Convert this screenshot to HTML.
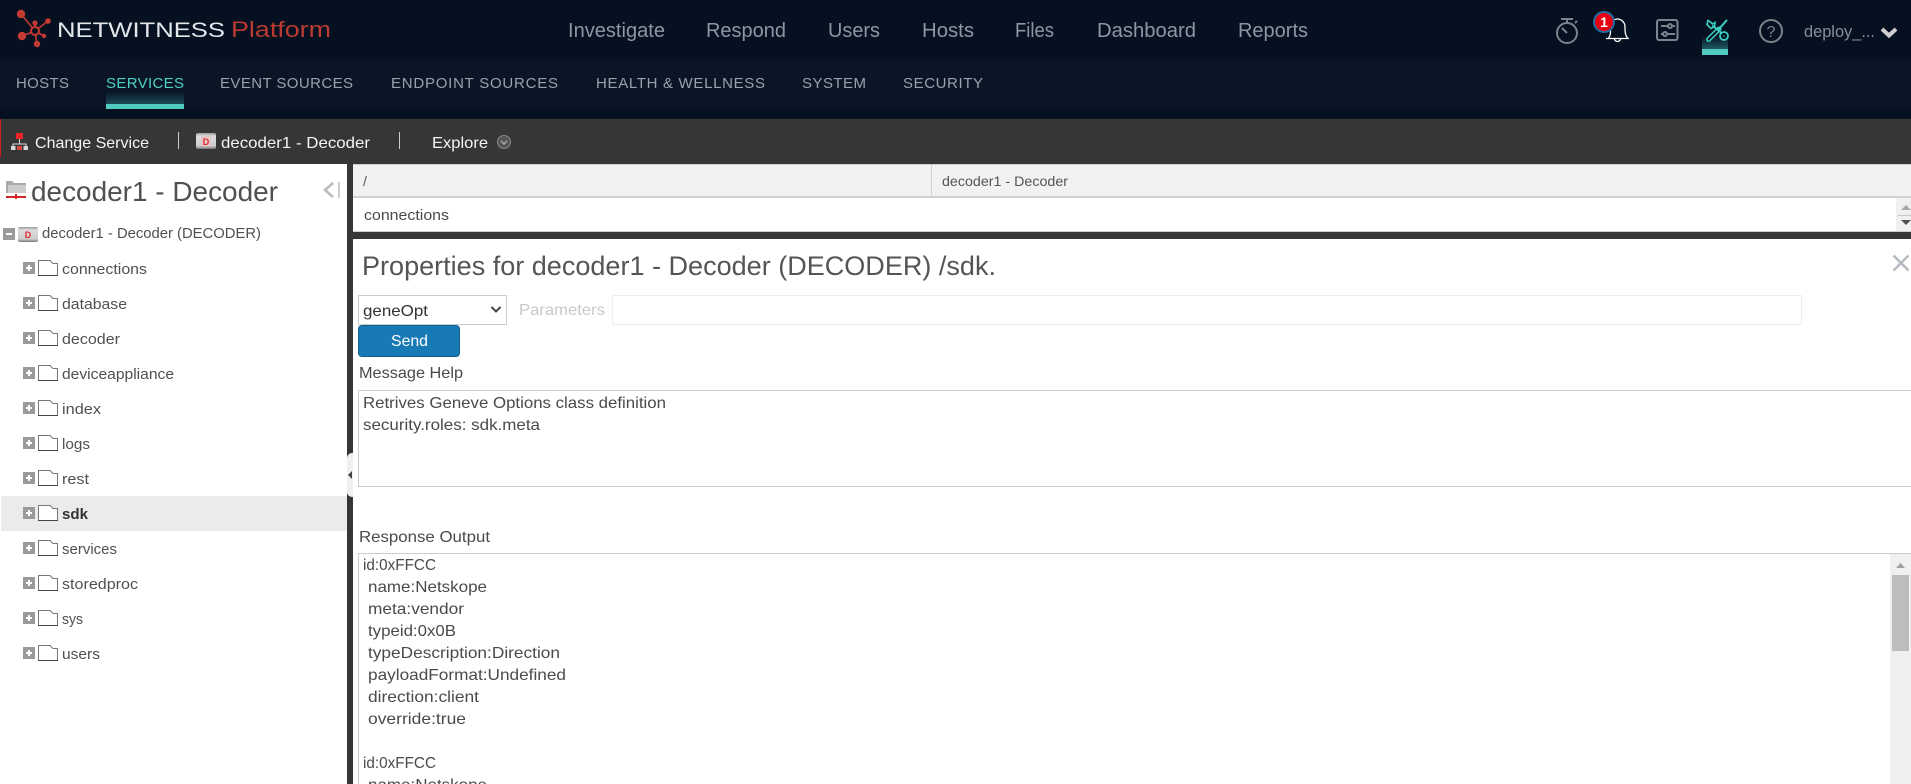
<!DOCTYPE html>
<html lang="en">
<head>
<meta charset="utf-8">
<title>NetWitness Platform - Explore</title>
<style>
html,body{margin:0;padding:0;width:1911px;height:784px;overflow:hidden;background:#fff;font-family:"Liberation Sans",sans-serif}
.b{position:absolute;box-sizing:border-box}
svg{position:absolute;left:0;top:0}
text{font-family:"Liberation Sans",sans-serif;white-space:pre}
.top{font-size:20px;fill:#8d96a3}
.sub{font-size:15px;fill:#98a2ad}
.bar{font-size:16px;fill:#f4f4f4}
.tree{font-size:15px;fill:#505050}
.body{font-size:16px;fill:#4a4a4a}
</style>
</head>
<body>
<div class="b" style="left:0;top:0;width:1911px;height:59px;background:#051020"></div>
<div class="b" style="left:0;top:59px;width:1911px;height:50px;background:#0a1626"></div>
<div class="b" style="left:0;top:109px;width:1911px;height:10px;background:#051020"></div>
<div class="b" style="left:106px;top:92px;width:78px;height:12px;background:linear-gradient(#0a1626,#1c4a55)"></div>
<div class="b" style="left:106px;top:104px;width:78px;height:5px;background:#50c9c0"></div>
<div class="b" style="left:1702px;top:36px;width:26px;height:13px;background:linear-gradient(#051020,#1e5a63)"></div>
<div class="b" style="left:1702px;top:49px;width:26px;height:6px;background:#50c9c0"></div>
<div class="b" style="left:0;top:119px;width:1911px;height:45px;background:#363636"></div>
<div class="b" style="left:0;top:119px;width:1px;height:38px;background:#d01c1c"></div>
<div class="b" style="left:1px;top:496px;width:346px;height:35px;background:#ebebeb"></div>
<div class="b" style="left:347px;top:164px;width:6px;height:620px;background:#363636"></div>
<div class="b" style="left:347px;top:453px;width:6px;height:44px;background:#f0f0f0;border-radius:5px 0 0 5px"></div>
<div class="b" style="left:353px;top:164px;width:1558px;height:34px;background:#f2f2f2;border-top:1px solid #d0d0d0;border-bottom:2px solid #d0d0d0"></div>
<div class="b" style="left:931px;top:165px;width:1px;height:32px;background:#d0d0d0"></div>
<div class="b" style="left:353px;top:231px;width:1558px;height:8px;background:#363636;border-top:1px solid #cfcfcf"></div>
<div class="b" style="left:1896px;top:198px;width:15px;height:33px;background:#f0f0f0"></div>
<div class="b" style="left:1898px;top:215px;width:13px;height:1px;background:#c8c8c8"></div>
<div class="b" style="left:358px;top:295px;width:149px;height:30px;background:#fff;border:1px solid #ccc"></div>
<div class="b" style="left:612px;top:295px;width:1190px;height:30px;background:#fff;border:1px solid #eee"></div>
<div class="b" style="left:358px;top:325px;width:102px;height:32px;background:#177ab5;border:1px solid #11608f;border-radius:4px"></div>
<div class="b" style="left:358px;top:390px;width:1553px;height:97px;border:1px solid #ccc;border-right:0"></div>
<div class="b" style="left:358px;top:553px;width:1553px;height:231px;border-top:1px solid #ccc;border-left:1px solid #ccc"></div>
<div class="b" style="left:1890px;top:554px;width:21px;height:230px;background:#f0f0f0"></div>
<div class="b" style="left:1892px;top:575px;width:17px;height:76px;background:#bdbdbd"></div>

<svg width="1911" height="784" viewBox="0 0 1911 784" xmlns="http://www.w3.org/2000/svg">
<defs>
<symbol id="plus" viewBox="0 0 12 12" width="12" height="12"><rect width="12" height="12" fill="#9a9a9a"/><path d="M3 6h6M6 3v6" stroke="#fff" stroke-width="2"/></symbol>
<symbol id="folder" viewBox="0 0 20 17" width="20" height="17"><path d="M.5 16.5V1.5H12L15 4.5H19.5V16.5Z" fill="#fff" stroke="#777"/><path d="M0 16.5H20" stroke="#444" stroke-width="1"/></symbol>
<linearGradient id="dg" x1="0" y1="0" x2="0" y2="1"><stop offset="0" stop-color="#999"/><stop offset=".2" stop-color="#ddd"/><stop offset=".8" stop-color="#ccc"/><stop offset="1" stop-color="#777"/></linearGradient>
</defs>

<!-- logo -->
<g stroke="#c53a32" stroke-width="1.6" fill="none"><path d="M21 14L35 31M48 21L35 31M35 23V31M22 36L35 31M37 44L35 31M44 36L35 31"/></g>
<g fill="#c53a32"><circle cx="21" cy="14" r="4.2"/><circle cx="48" cy="21" r="2.8"/><circle cx="35" cy="23" r="2.6"/><circle cx="22" cy="36" r="4.2"/><circle cx="37" cy="44" r="3.2"/><circle cx="44" cy="36" r="2.2"/></g>
<circle cx="35" cy="31" r="4" fill="#051020" stroke="#c53a32" stroke-width="2"/>
<text x="57" y="37" font-size="21" fill="#e4e7ea" textLength="168" lengthAdjust="spacingAndGlyphs">NETWITNESS</text>
<text x="231" y="37" font-size="22" fill="#bb3a32" textLength="100" lengthAdjust="spacingAndGlyphs">Platform</text>

<!-- top nav -->
<text class="top" x="568" y="37" textLength="97" lengthAdjust="spacingAndGlyphs">Investigate</text>
<text class="top" x="706" y="37" textLength="80" lengthAdjust="spacingAndGlyphs">Respond</text>
<text class="top" x="828" y="37" textLength="52" lengthAdjust="spacingAndGlyphs">Users</text>
<text class="top" x="922" y="37" textLength="52" lengthAdjust="spacingAndGlyphs">Hosts</text>
<text class="top" x="1015" y="37" textLength="39" lengthAdjust="spacingAndGlyphs">Files</text>
<text class="top" x="1097" y="37" textLength="99" lengthAdjust="spacingAndGlyphs">Dashboard</text>
<text class="top" x="1238" y="37" textLength="70" lengthAdjust="spacingAndGlyphs">Reports</text>

<!-- top icons -->
<g fill="none" stroke="#7d838a" stroke-width="2">
<circle cx="1567" cy="33" r="10"/><path d="M1561 19H1573M1567 19V23M1575 23l2-2M1567 33l-5-5"/>
<rect x="1657" y="20" width="20.5" height="20" rx="2"/><path d="M1661 26H1675M1661 34H1675"/>
<circle cx="1670" cy="26" r="2" fill="#051020"/><circle cx="1665" cy="34" r="2" fill="#051020"/>
<circle cx="1771" cy="31" r="11"/>
</g>
<text x="1771" y="37" font-size="16" fill="#7d838a" text-anchor="middle">?</text>
<g fill="none" stroke="#fff" stroke-width="1.3"><path d="M1606 38.500H1629M1608.500 38C1611 35 1610.500 31 1610.500 27C1610.500 22 1614 19 1617.500 19C1621 19 1625 22 1625 27C1625 31 1625 35 1627.500 38"/><path d="M1614.500 39a3 2.500 0 0 0 6 0"/></g>
<circle cx="1604" cy="22" r="10" fill="#e60012" stroke="#1f6fa5" stroke-width="2"/>
<text x="1604" y="27" font-size="14" font-weight="bold" fill="#fff" text-anchor="middle">1</text>
<g fill="none" stroke-linecap="round">
<path d="M1708.500 39.500L1719 29" stroke="#3dd0c4" stroke-width="5"/>
<path d="M1708.500 39.500L1719 29" stroke="#051020" stroke-width="2"/>
<path d="M1719 29L1726.500 20.500" stroke="#3dd0c4" stroke-width="2"/>
<path d="M1713 26L1721.500 33" stroke="#3dd0c4" stroke-width="2"/>
<path d="M1708 20.500L1707 24.500L1711 28.500L1714.500 26.500L1715 22.500L1712.500 24L1710.500 22Z" stroke="#3dd0c4" stroke-width="1.600"/>
<circle cx="1724" cy="36" r="4" stroke="#3dd0c4" stroke-width="1.800"/>
<circle cx="1724" cy="36" r=".8" fill="#3dd0c4"/>
</g>
<text x="1804" y="37" font-size="17" fill="#8a8f96" textLength="71" lengthAdjust="spacingAndGlyphs">deploy_...</text>
<path d="M1882 29L1889 35.500L1896 29" fill="none" stroke="#cfcfcf" stroke-width="4"/>

<!-- sub nav -->
<text class="sub" x="16" y="88" textLength="53" lengthAdjust="spacing">HOSTS</text>
<text class="sub" x="106" y="88" textLength="78" lengthAdjust="spacing" style="fill:#4fd0c4">SERVICES</text>
<text class="sub" x="220" y="88" textLength="133" lengthAdjust="spacing">EVENT SOURCES</text>
<text class="sub" x="391" y="88" textLength="167" lengthAdjust="spacing">ENDPOINT SOURCES</text>
<text class="sub" x="596" y="88" textLength="169" lengthAdjust="spacing">HEALTH &amp; WELLNESS</text>
<text class="sub" x="802" y="88" textLength="64" lengthAdjust="spacing">SYSTEM</text>
<text class="sub" x="903" y="88" textLength="80" lengthAdjust="spacing">SECURITY</text>

<!-- grey bar -->
<rect x="16" y="133" width="7" height="6" fill="#e8242a"/><path d="M19.500 139V144M13 146V144H26V146" stroke="#ddd" fill="none"/><g fill="#d8d8d8"><rect x="11" y="146" width="4.500" height="4"/><rect x="17" y="146" width="5" height="4" fill="#d44"/><rect x="23.500" y="146" width="4.500" height="4"/></g>
<text class="bar" x="35" y="148" textLength="114" lengthAdjust="spacingAndGlyphs">Change Service</text>
<rect x="178" y="132" width="1" height="17" fill="#ccc"/>
<rect x="196" y="133" width="20" height="16" rx="2" fill="url(#dg)"/><rect x="201" y="136" width="10" height="10" fill="#e3c6c6"/><text x="206" y="145" font-size="9" font-weight="bold" fill="#e0282e" text-anchor="middle">D</text>
<text class="bar" x="221" y="148" textLength="149" lengthAdjust="spacingAndGlyphs">decoder1 - Decoder</text>
<rect x="399" y="132" width="1" height="17" fill="#ccc"/>
<text class="bar" x="432" y="148" textLength="56" lengthAdjust="spacingAndGlyphs">Explore</text>
<circle cx="504" cy="142" r="6.500" fill="#555" stroke="#888"/><path d="M501 141l3 3 3-3" fill="none" stroke="#aaa" stroke-width="1.500"/>

<!-- left panel -->
<path d="M6 181h6l2 2h12v10H6z" fill="#aaa"/><path d="M8 185h18v8H8z" fill="#ccc"/><path d="M6 197H26M16 194v5" stroke="#d2232a" stroke-width="2"/>
<text x="31" y="201" font-size="28" fill="#505050" textLength="247" lengthAdjust="spacingAndGlyphs">decoder1 - Decoder</text>
<path d="M333 183L325 190L333 197" fill="none" stroke="#bbb" stroke-width="2.500"/><rect x="338" y="182" width="2" height="16" fill="#ccc"/>

<rect x="3" y="228" width="12" height="12" fill="#9a9a9a"/><path d="M6 234h6" stroke="#fff" stroke-width="2"/>
<rect x="18" y="227" width="20" height="15" rx="2" fill="url(#dg)"/><text x="28" y="238" font-size="9" font-weight="bold" fill="#e0282e" text-anchor="middle">D</text>
<text class="tree" x="42" y="238" textLength="219" lengthAdjust="spacingAndGlyphs">decoder1 - Decoder (DECODER)</text>

<use href="#plus" x="23" y="262"/><use href="#folder" x="38" y="259"/><text class="tree" x="62" y="274" textLength="85" lengthAdjust="spacingAndGlyphs">connections</text>
<use href="#plus" x="23" y="297"/><use href="#folder" x="38" y="294"/><text class="tree" x="62" y="309" textLength="65" lengthAdjust="spacingAndGlyphs">database</text>
<use href="#plus" x="23" y="332"/><use href="#folder" x="38" y="329"/><text class="tree" x="62" y="344" textLength="58" lengthAdjust="spacingAndGlyphs">decoder</text>
<use href="#plus" x="23" y="367"/><use href="#folder" x="38" y="364"/><text class="tree" x="62" y="379" textLength="112" lengthAdjust="spacingAndGlyphs">deviceappliance</text>
<use href="#plus" x="23" y="402"/><use href="#folder" x="38" y="399"/><text class="tree" x="62" y="414" textLength="39" lengthAdjust="spacingAndGlyphs">index</text>
<use href="#plus" x="23" y="437"/><use href="#folder" x="38" y="434"/><text class="tree" x="62" y="449" textLength="28" lengthAdjust="spacingAndGlyphs">logs</text>
<use href="#plus" x="23" y="472"/><use href="#folder" x="38" y="469"/><text class="tree" x="62" y="484" textLength="27" lengthAdjust="spacingAndGlyphs">rest</text>
<use href="#plus" x="23" y="507"/><use href="#folder" x="38" y="504"/><text class="tree" x="62" y="519" font-weight="bold" textLength="26" lengthAdjust="spacingAndGlyphs" style="fill:#333">sdk</text>
<use href="#plus" x="23" y="542"/><use href="#folder" x="38" y="539"/><text class="tree" x="62" y="554" textLength="55" lengthAdjust="spacingAndGlyphs">services</text>
<use href="#plus" x="23" y="577"/><use href="#folder" x="38" y="574"/><text class="tree" x="62" y="589" textLength="76" lengthAdjust="spacingAndGlyphs">storedproc</text>
<use href="#plus" x="23" y="612"/><use href="#folder" x="38" y="609"/><text class="tree" x="62" y="624" textLength="21" lengthAdjust="spacingAndGlyphs">sys</text>
<use href="#plus" x="23" y="647"/><use href="#folder" x="38" y="644"/><text class="tree" x="62" y="659" textLength="38" lengthAdjust="spacingAndGlyphs">users</text>
<path d="M352 471l-4 4 4 4z" fill="#444"/>

<!-- breadcrumb / list -->
<text x="363" y="186" font-size="14" fill="#555">/</text>
<text x="942" y="186" font-size="14" fill="#555" textLength="126" lengthAdjust="spacingAndGlyphs">decoder1 - Decoder</text>
<text x="364" y="220" font-size="15" fill="#4a4a4a" textLength="85" lengthAdjust="spacingAndGlyphs">connections</text>
<path d="M1906 205l-5 5h10z" fill="#a8a8a8"/><path d="M1901 220h10l-5 5z" fill="#505050"/>

<!-- properties -->
<text x="362" y="275" font-size="27" fill="#555" textLength="634" lengthAdjust="spacingAndGlyphs">Properties for decoder1 - Decoder (DECODER) /sdk.</text>
<path d="M1893.500 255.500L1908.500 270.500M1908.500 255.500L1893.500 270.500" stroke="#b4bac0" stroke-width="2.500"/>
<text class="body" x="363" y="316" textLength="65" lengthAdjust="spacingAndGlyphs" style="fill:#333">geneOpt</text>
<path d="M491.500 307L496 311.500L500.500 307" fill="none" stroke="#444" stroke-width="2"/>
<text class="body" x="519" y="315" textLength="86" lengthAdjust="spacingAndGlyphs" style="fill:#c8c8c8">Parameters</text>
<text class="body" x="391" y="346" textLength="37" lengthAdjust="spacingAndGlyphs" style="fill:#fff">Send</text>
<text class="body" x="359" y="378" textLength="104" lengthAdjust="spacingAndGlyphs">Message Help</text>
<text class="body" x="363" y="408" textLength="303" lengthAdjust="spacingAndGlyphs">Retrives Geneve Options class definition</text>
<text class="body" x="363" y="430" textLength="177" lengthAdjust="spacingAndGlyphs">security.roles: sdk.meta</text>
<text class="body" x="359" y="542" textLength="131" lengthAdjust="spacingAndGlyphs">Response Output</text>
<text class="body" x="363" y="570" textLength="73" lengthAdjust="spacingAndGlyphs">id:0xFFCC</text>
<text class="body" x="368" y="592" textLength="119" lengthAdjust="spacingAndGlyphs">name:Netskope</text>
<text class="body" x="368" y="614" textLength="96" lengthAdjust="spacingAndGlyphs">meta:vendor</text>
<text class="body" x="368" y="636" textLength="88" lengthAdjust="spacingAndGlyphs">typeid:0x0B</text>
<text class="body" x="368" y="658" textLength="192" lengthAdjust="spacingAndGlyphs">typeDescription:Direction</text>
<text class="body" x="368" y="680" textLength="198" lengthAdjust="spacingAndGlyphs">payloadFormat:Undefined</text>
<text class="body" x="368" y="702" textLength="111" lengthAdjust="spacingAndGlyphs">direction:client</text>
<text class="body" x="368" y="724" textLength="98" lengthAdjust="spacingAndGlyphs">override:true</text>
<text class="body" x="363" y="768" textLength="73" lengthAdjust="spacingAndGlyphs">id:0xFFCC</text>
<text class="body" x="368" y="790" textLength="119" lengthAdjust="spacingAndGlyphs">name:Netskope</text>
<path d="M1900.500 563l-4.500 5h9z" fill="#a0a0a0"/>
</svg>
</body>
</html>
